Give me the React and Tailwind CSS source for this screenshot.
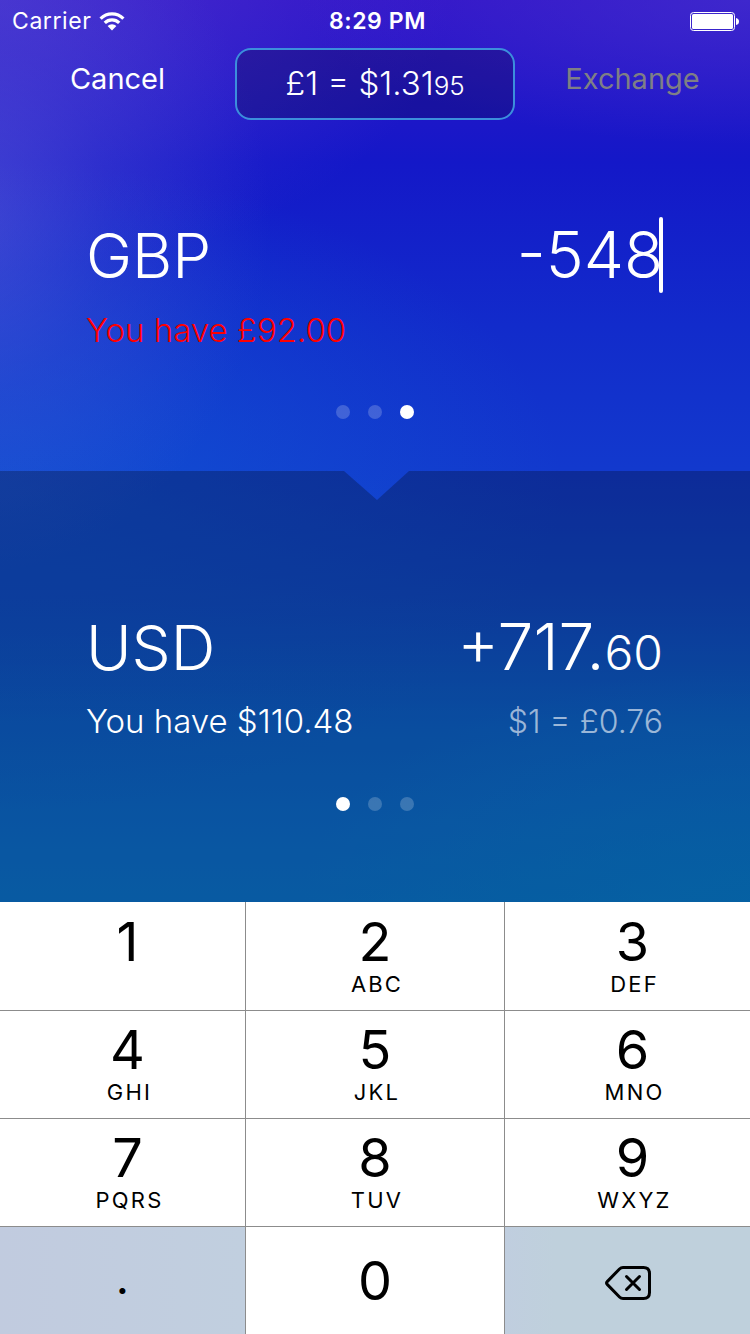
const KEYS = [
  { digit: "1", letters: "" },
  { digit: "2", letters: "ABC" },
  { digit: "3", letters: "DEF" },
  { digit: "4", letters: "GHI" },
  { digit: "5", letters: "JKL" },
  { digit: "6", letters: "MNO" },
  { digit: "7", letters: "PQRS" },
  { digit: "8", letters: "TUV" },
  { digit: "9", letters: "WXYZ" },
];

function WifiIcon() {
  return (
    <svg viewBox="0 0 26 19" className="h-[19px] w-[26px]" aria-hidden="true">
      <g fill="none" stroke="white" strokeWidth="3.2">
        <path d="M1.6 6.6 A16.2 16.2 0 0 1 24.4 6.6" />
        <path d="M5.8 10.8 A10.2 10.2 0 0 1 20.2 10.8" />
      </g>
      <path d="M13 18.4 L8.6 14 A6.3 6.3 0 0 1 17.4 14 Z" fill="white" />
    </svg>
  );
}

function BatteryIcon() {
  return (
    <svg viewBox="0 0 49 19" className="h-[19px] w-[49px]" aria-hidden="true">
      <rect x="0.5" y="0.5" width="44" height="18" rx="3" fill="none" stroke="white" />
      <rect x="2" y="2" width="41" height="15" rx="1.5" fill="white" />
      <path d="M46 6 Q49 6.5 49 9.5 Q49 12.5 46 13 Z" fill="white" />
    </svg>
  );
}

function StatusBar() {
  return (
    <div className="grid h-[42px] grid-cols-3 items-center pr-[11px] pl-3 text-[23px] leading-[42px]">
      <div className="flex items-center gap-2">
        <span className="tracking-wide">Carrier</span>
        <WifiIcon />
      </div>
      <div className="pl-1 text-center font-semibold tracking-wide">8:29 PM</div>
      <div className="flex justify-end">
        <BatteryIcon />
      </div>
    </div>
  );
}

function NavBar() {
  return (
    <header className="mt-1.5 grid grid-cols-[1fr_280px_1fr] items-start">
      <button type="button" className="h-[62px] text-[29px]">
        Cancel
      </button>
      <button
        type="button"
        className="h-[72px] rounded-2xl border-2 border-[#3c8fdc] bg-black/20 text-[33px] font-light"
      >
        £1 = $1.31<span className="text-[26px]">95</span>
      </button>
      <button type="button" disabled className="h-[62px] text-[29px] text-[#7f7f85]">
        Exchange
      </button>
    </header>
  );
}

function PageDots({ active, label }) {
  return (
    <nav aria-label={label} className="mt-[50px] flex justify-center gap-[18px]">
      {[0, 1, 2].map((i) => (
        <button
          key={i}
          type="button"
          aria-label={`Currency ${i + 1}`}
          className={i === active ? "size-3.5 rounded-full bg-white" : "size-3.5 rounded-full bg-white/20"}
        />
      ))}
    </nav>
  );
}

function Keypad() {
  return (
    <div className="grid grid-cols-[246fr_259fr_245fr] bg-white text-black">
      {KEYS.map(({ digit, letters }, i) => (
        <button
          key={digit}
          type="button"
          className={[
            "flex h-27 flex-col items-center border-[#8c8c8c]",
            i > 2 ? "border-t pt-[9px]" : "pt-2.5",
            i % 3 < 2 ? "border-r" : "",
            i % 3 !== 1 ? "pl-2.5" : "",
          ].join(" ")}
        >
          <span className="text-[54px] leading-[60px]">{digit}</span>
          <span className="pl-1 text-[22px] leading-6 tracking-widest">{letters}</span>
        </button>
      ))}
      <button
        type="button"
        className="h-27 border-t border-r border-[#8c8c8c] bg-linear-to-r from-[#c1cbdf] to-[#c1cfdf] pb-1.5 text-[46px]"
      >
        .
      </button>
      <button type="button" className="h-27 border-t border-r border-[#8c8c8c] text-[54px]">
        0
      </button>
      <button
        type="button"
        aria-label="Delete"
        className="flex h-27 items-center justify-center border-t border-[#8c8c8c] bg-linear-to-r from-[#c0cedf] to-[#bfd0dc] to-20% pt-1"
      >
        <svg
          viewBox="0 0 46 34"
          className="h-[34px] w-[46px]"
          fill="none"
          stroke="black"
          strokeWidth="3"
          strokeLinecap="round"
          strokeLinejoin="round"
          aria-hidden="true"
        >
          <path d="M18 1.5 H38.5 Q44.5 1.5 44.5 7.5 V26.5 Q44.5 32.5 38.5 32.5 H18 Q16 32.5 14.5 31 L2.2 18.4 Q0.8 17 2.2 15.6 L14.5 3 Q16 1.5 18 1.5 Z" />
          <path d="M21.5 10.5 L34.5 23.5 M34.5 10.5 L21.5 23.5" />
        </svg>
      </button>
    </div>
  );
}

export default function App() {
  return (
    <main className="flex min-h-screen flex-col bg-white font-['Inter',sans-serif] text-white">
      <div className="flex grow flex-col bg-[radial-gradient(ellipse_42%_40%_at_-6%_24%,rgba(96,96,218,0.55),rgba(84,88,214,0.25)_50%,rgba(60,80,214,0)),radial-gradient(ellipse_75%_36%_at_0%_54%,rgba(16,90,212,0.65),rgba(16,90,212,0)),radial-gradient(ellipse_60%_16%_at_100%_0%,rgba(70,52,208,0.6),rgba(70,52,208,0)),radial-gradient(ellipse_60%_30%_at_0%_0%,rgba(84,68,212,0.55),rgba(84,68,212,0)),radial-gradient(ellipse_60%_26%_at_100%_100%,rgba(3,140,220,0.45),rgba(3,140,220,0)),linear-gradient(180deg,#3214c8_0%,#1418c8_18%,#122bcb_36%,#1239cd_52%,#104bcd_66%,#0d66d4_80%,#0d72d8_92%,#0b79d8_100%)]">
        <StatusBar />
        <NavBar />

        <section aria-label="From" className="pt-[97px] pb-[52px]">
          <div className="pr-[87px] pl-[86px]">
            <div className="flex h-19 items-center justify-between">
              <label htmlFor="amount" className="text-[62px] font-light">
                GBP
              </label>
              <div className="flex h-full items-center">
                <input
                  id="amount"
                  type="text"
                  inputMode="decimal"
                  defaultValue="-548"
                  className="h-full w-60 bg-transparent pb-0.5 text-right text-[64px] font-light outline-none"
                />
                <span className="-ml-1 h-full w-1 rounded-full bg-white" />
              </div>
            </div>
            <p className="mt-3 h-[50px] text-[33px] leading-[50px] font-light text-[#ff0000]">
              You have £92.00
            </p>
          </div>
          <PageDots active={2} label="From currency" />
        </section>

        <section
          aria-label="To"
          className="grow bg-black/25 pt-[138px] pb-[91px] [clip-path:polygon(0_0,calc(50%-31px)_0,calc(50%+2px)_29px,calc(50%+34px)_0,100%_0,100%_100%,0_100%)]"
        >
          <div className="pr-[87px] pl-[86px]">
            <div className="flex h-19 items-center justify-between font-light">
              <h2 className="text-[62px]">USD</h2>
              <p className="text-[64px]">
                +717.<span className="text-[48px]">60</span>
              </p>
            </div>
            <div className="mt-3 flex h-[50px] items-center justify-between">
              <p className="text-[33px] font-light">You have $110.48</p>
              <p className="text-[32px] font-light text-white/60">$1 = £0.76</p>
            </div>
          </div>
          <PageDots active={0} label="To currency" />
        </section>
      </div>
      <Keypad />
    </main>
  );
}
